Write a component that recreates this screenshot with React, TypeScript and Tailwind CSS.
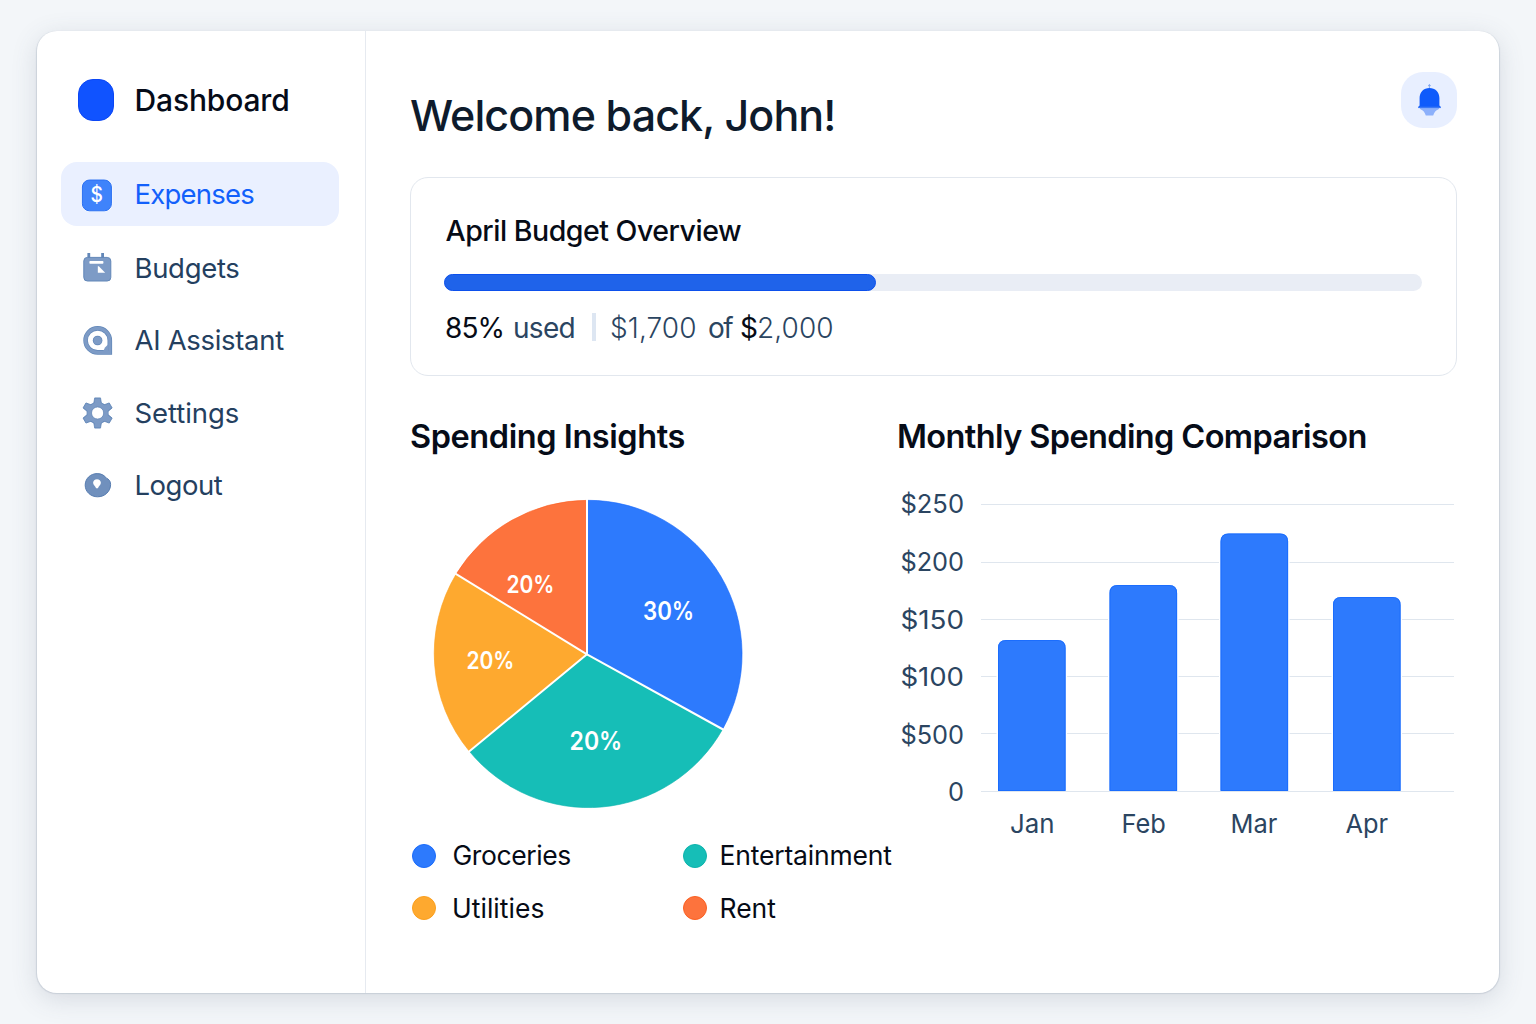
import type { ReactNode } from "react";

const ICON = "h-8 w-8 shrink-0 overflow-visible";
const FILL = "#7d9bc6";
const EDGE = "#6287b8";

function DollarIcon() {
  return (
    <svg viewBox="0 0 32 32" className={ICON}>
      <rect x="0.3" y="0.9" width="31.2" height="33" rx="8.2" fill="#f6f9ff" />
      <rect x="1.4" y="2" width="29" height="30.8" rx="7" fill="#3f83fb" stroke="#2a6ff2" strokeWidth="1" />
      <text
        x="15.6"
        y="23.6"
        textAnchor="middle"
        fontSize="21"
        fontWeight="500"
        fill="#ffffff"
        fontFamily="Inter, sans-serif"
        textLength="12.4"
        lengthAdjust="spacingAndGlyphs"
      >
        $
      </text>
    </svg>
  );
}

function CalendarIcon() {
  return (
    <svg viewBox="0 0 32 32" className={ICON}>
      <path d="M7.8 1V6M21.6 1V6" stroke={EDGE} strokeWidth="2.8" />
      <rect x="2.8" y="5.4" width="27" height="23.6" rx="3.6" fill={FILL} stroke={EDGE} strokeWidth="1" />
      <rect x="8.4" y="9" width="14" height="2.7" rx="0.8" fill="#ffffff" />
      <path d="M16.8 14.2V20.8H24.2L17.8 14.2Z" fill="#ffffff" />
    </svg>
  );
}

function AssistantIcon() {
  return (
    <svg viewBox="0 0 32 32" className={ICON}>
      <path
        d="M16.6 3.4A12 12 0 1 0 16.6 27.4H28.8V15.4A12 12 0 0 0 16.6 3.4Z"
        fill="#ffffff"
        stroke={EDGE}
        strokeWidth="4.6"
      />
      <path
        d="M16.6 3.4A12 12 0 1 0 16.6 27.4H28.8V15.4A12 12 0 0 0 16.6 3.4Z"
        fill="none"
        stroke={FILL}
        strokeWidth="3.2"
      />
      <path d="M22 26.5 24 22.6 27 19.5V27Z" fill={FILL} />
      <circle cx="16.6" cy="15.5" r="4.8" fill={EDGE} />
      <circle cx="16.6" cy="15.5" r="4.1" fill={FILL} />
    </svg>
  );
}

const TEETH = [0, 60, 120, 180, 240, 300];

function GearIcon() {
  return (
    <svg viewBox="0 0 32 32" className={ICON}>
      {TEETH.map((a) => (
        <path
          key={a}
          d="M13.7 0.9H19.5L20.7 8H12.5Z"
          fill={EDGE}
          stroke={EDGE}
          strokeWidth="0.8"
          strokeLinejoin="round"
          transform={`rotate(${a} 16.6 16)`}
        />
      ))}
      <circle cx="16.6" cy="16" r="11" fill={EDGE} />
      {TEETH.map((a) => (
        <path key={a} d="M14.2 1.4H19L20.2 8H13Z" fill={FILL} transform={`rotate(${a} 16.6 16)`} />
      ))}
      <circle cx="16.6" cy="16" r="10.4" fill={FILL} />
      <circle cx="16.6" cy="16" r="6.1" fill="#ffffff" stroke={EDGE} strokeWidth="0.8" />
    </svg>
  );
}

function LogoutIcon() {
  return (
    <svg viewBox="0 0 32 32" className={ICON}>
      <path
        d="M16.2 4.6C20.4 4.6 23.6 6.4 25.4 9.2C27.8 10 29.6 12.2 29.6 15.4C29.6 22.4 23.8 27.8 16.6 27.8C9.8 27.8 4.2 22.8 4.2 16.2C4.2 9.6 9.4 4.6 16.2 4.6Z"
        fill="#7090bd"
        stroke="#567cb0"
        strokeWidth="1"
      />
      <path
        d="M16 10.2C18.2 10.2 19.9 11.7 19.9 13.8C19.9 16.2 17.6 17.2 16.9 19.2H15.1C14.4 17.2 12.1 16.2 12.1 13.8C12.1 11.7 13.8 10.2 16 10.2Z"
        fill="#ffffff"
      />
    </svg>
  );
}

function BellIcon() {
  return (
    <svg viewBox="0 0 56 56" className="h-14 w-14">
      <path d="M28.4 12V16M27 13.6H29.8" stroke="#7fa4ee" strokeWidth="0.9" />
      <path d="M18.5 35.4H38.5L37.6 37.2C34.6 38.2 33.4 40.2 32.2 43.4H24.8C23.6 40.2 22.4 38.2 19.4 37.2Z" fill="#8cb0fb" />
      <path
        d="M28.4 15.9C34.2 15.9 38.4 20 38.4 26V33.6L39.6 34.8V36H17.4V34.8L18.6 33.6V26C18.6 20 22.8 15.9 28.4 15.9Z"
        fill="#0f5bfb"
      />
      <path d="M17.4 35.4H39.6" stroke="#3a78f5" strokeWidth="1.4" />
    </svg>
  );
}

function NavItem({ icon, label, text, active }: { icon: ReactNode; label: string; text: string; active?: boolean }) {
  return (
    <a
      className={
        active
          ? "mb-0.5 flex h-16 items-center gap-[21.5px] rounded-2xl bg-[#eaf0ff] pl-5 text-[#1260fb]"
          : "flex h-16 items-center gap-[21.5px] pl-5 text-[#24405f]"
      }
    >
      {icon}
      <span className={text}>{label}</span>
    </a>
  );
}

const SLICES = [
  { d: "M154.5 154.3V0.3A154 154 0 0 1 289.6 229.2Z", fill: "#2d7afd", edge: "#1466fb" },
  { d: "M154.5 154.3L289.6 229.2A154 154 0 0 1 36.4 251.3Z", fill: "#16beb7", edge: "#0db3ac" },
  { d: "M154.5 154.3L36.4 251.3A154 154 0 0 1 23.2 74.1Z", fill: "#fea92f", edge: "#fb9f1d" },
  { d: "M154.5 154.3L23.2 74.1A154 154 0 0 1 154.5 0.3Z", fill: "#fd733d", edge: "#fb6022" },
];

const SHARES = [
  { x: 210, y: 120.4, size: 25, value: "30%", w: 51.2 },
  { x: 136.5, y: 249.6, size: 26, value: "20%", w: 52.8 },
  { x: 33.4, y: 168.7, size: 24, value: "20%", w: 48 },
  { x: 73.4, y: 92.6, size: 24, value: "20%", w: 48 },
];

function PieChart() {
  return (
    <svg viewBox="0 0 309 309" className="ml-[22.5px] mt-[39px] h-[309px] w-[309px] overflow-visible">
      {SLICES.map((s) => (
        <path key={s.fill} d={s.d} fill={s.fill} stroke={s.edge} strokeWidth="0.6" />
      ))}
      <path
        d="M154 154.3V-1M154 154.3L291 230M154 154.3L35.2 252.3M154 154.3L22 73.4"
        stroke="#ffffff"
        strokeWidth="2"
        fill="none"
      />
      {SHARES.map((s, i) => (
        <text
          key={i}
          x={s.x}
          y={s.y}
          fontSize={s.size}
          fontWeight="600"
          fill="#ffffff"
          textLength={s.w}
          lengthAdjust="spacingAndGlyphs"
        >
          {s.value}
        </text>
      ))}
    </svg>
  );
}

const TICKS = [
  { label: "$250", line: 20.5, x: 3.4, w: 63.6, y: 29.2 },
  { label: "$200", line: 78.5, x: 3.4, w: 63.6, y: 87.4 },
  { label: "$150", line: 135.5, x: 3.4, w: 63.6, y: 145 },
  { label: "$100", line: 192.5, x: 3.4, w: 63.6, y: 202.4 },
  { label: "$500", line: 249.5, x: 3.4, w: 63.6, y: 260 },
  { label: "0", line: 307.5, x: 51, w: 16, y: 317.2 },
];

const BARS = [
  { label: "Jan", x: 101, top: 156, tx: 113, tw: 44.6 },
  { label: "Feb", x: 212.5, top: 101, tx: 224.5, tw: 44.4 },
  { label: "Mar", x: 323.5, top: 49.5, tx: 333.6, tw: 46.8 },
  { label: "Apr", x: 436, top: 113, tx: 448.5, tw: 42.6 },
];

function BarChart() {
  return (
    <svg viewBox="0 0 560 360" className="mt-[23px] h-[360px] w-[560px]">
      {TICKS.map((t) => (
        <g key={t.label}>
          <path d={`M84 ${t.line}H557`} stroke="#dfe6ee" strokeWidth="1.2" />
          <text
            x={t.x}
            y={t.y}
            fontSize="26"
            fontWeight="370"
            fill="#2b4561"
            textLength={t.w}
            lengthAdjust="spacingAndGlyphs"
          >
            {t.label}
          </text>
        </g>
      ))}
      {BARS.map((b) => (
        <g key={b.label}>
          <path
            d={`M${b.x} 307V${b.top + 8}q0 -8 8 -8h51.6q8 0 8 8V307Z`}
            fill="#2d7afd"
            stroke="#ffffff"
            strokeWidth="3"
            paintOrder="stroke"
          />
          <path
            d={`M${b.x + 0.5} 306.5V${b.top + 8}q0 -7.5 7.5 -7.5h51.6q7.5 0 7.5 7.5V306.5Z`}
            fill="none"
            stroke="#176afc"
            strokeWidth="0.8"
          />
          <text x={b.tx} y="349.4" fontSize="26" fill="#2b4561" textLength={b.tw} lengthAdjust="spacingAndGlyphs">
            {b.label}
          </text>
        </g>
      ))}
      <path d="M84 307.5H557" stroke="#dfe6ee" strokeWidth="1" />
    </svg>
  );
}

function Legend({ dot, label, text }: { dot: string; label: string; text: string }) {
  return (
    <div className="flex items-center">
      <span className={dot} />
      <span className={text}>{label}</span>
    </div>
  );
}

export default function App() {
  return (
    <div className="flex h-[1024px] w-[1536px] bg-[#f3f6f9] px-[37px] pt-[31px] font-['Inter',sans-serif] whitespace-nowrap">
      <div className="flex h-[962px] w-[1461.5px] rounded-[20px] bg-white shadow-[0_0.5px_1px_0.5px_rgba(130,145,165,0.26),0_6px_26px_rgba(71,85,105,0.17)]">
        <aside className="w-[329px] shrink-0 border-r-[1.5px] border-[#e6eaf0] pr-[26px] pl-6">
          <div className="mt-12 flex h-[42px] items-center pl-[17px]">
            <span className="h-[42px] w-9 rounded-[15px] border border-[#0b46f5] bg-[#1053ff]" />
            <span className="mt-px ml-[20.5px] text-[30px] font-medium tracking-[-0.15px] text-[#050b18]">Dashboard</span>
          </div>
          <nav className="mt-[41px] flex flex-col gap-[8.3px]">
            <NavItem active icon={<DollarIcon />} label="Expenses" text="mt-0.5 text-[27.5px] tracking-[-0.78px]" />
            <NavItem icon={<CalendarIcon />} label="Budgets" text="text-[27.5px] tracking-[-0.32px]" />
            <NavItem icon={<AssistantIcon />} label="AI Assistant" text="text-[27.5px] tracking-[-0.31px]" />
            <NavItem icon={<GearIcon />} label="Settings" text="mt-px text-[27.5px] tracking-[-0.08px]" />
            <NavItem icon={<LogoutIcon />} label="Logout" text="text-[27.5px] tracking-[-0.5px]" />
          </nav>
        </aside>

        <main className="flex-1 pl-[44px]">
          <header className="flex h-[146px] w-[1047px] justify-between">
            <h1 className="mt-[56px] h-14 text-[43px] leading-14 font-medium tracking-[-0.9px] text-[#0e1b2c]">
              Welcome back, John!
            </h1>
            <button className="mt-[41px] h-14 w-14 rounded-[22px] bg-[#e8efff]">
              <BellIcon />
            </button>
          </header>

          <section className="h-[199px] w-[1047px] rounded-[18px] border-[1.3px] border-[#e2e7ee] px-[33px] pt-8">
            <h2 className="ml-[1.5px] h-[42px] text-[28.5px] leading-[42px] font-medium tracking-[-0.48px] text-[#060b16]">
              April Budget Overview
            </h2>
            <div className="mt-[22px] h-[17px] w-[978px] rounded-full bg-[#e9edf5]">
              <div className="h-[17px] w-[431.5px] rounded-full border border-[#0c50ec] bg-[#1f63ea]" />
            </div>
            <div className="mt-[17px] ml-px flex h-10 items-center text-[28px] text-[#2b4561]">
              <span className="w-[68px] tracking-[-0.92px] text-[#060b16]">85%</span>
              <span className="w-[79px] tracking-[-0.7px]">used</span>
              <span className="-mt-0.5 h-7 w-[3.5px] bg-[#dde6f2]" />
              <span className="ml-[14.5px] w-[98px] font-[360] tracking-[0.1px]">$1,700</span>
              <span className="w-8 tracking-[-1.5px]">of</span>
              <span className="w-[17px] tracking-[-1px] text-[#060b16]">$</span>
              <span className="font-[360] tracking-[0.1px]">2,000</span>
            </div>
          </section>

          <div className="mt-[37px] flex">
            <section className="w-[487px]">
              <h2 className="h-12 text-[32.5px] leading-12 font-semibold tracking-[-0.43px] text-[#060c18]">
                Spending Insights
              </h2>
              <PieChart />
              <div className="mt-[21px] ml-0.5 grid grid-cols-[271px_auto] grid-rows-[52px_53px] text-[#060b16]">
                <Legend
                  dot="h-6 w-6 rounded-full border border-[#1a6bfb] bg-[#2d7afd]"
                  label="Groceries"
                  text="ml-[16.5px] text-[26.5px] tracking-[-0.42px]"
                />
                <Legend
                  dot="h-6 w-6 rounded-full border border-[#0db3ac] bg-[#16beb7]"
                  label="Entertainment"
                  text="ml-[12.5px] text-[26.5px] tracking-[-0.18px]"
                />
                <Legend
                  dot="-mt-0.5 h-6 w-6 rounded-full border border-[#fb9f1d] bg-[#fea92f]"
                  label="Utilities"
                  text="ml-4 text-[26.5px] tracking-[0.03px]"
                />
                <Legend
                  dot="-mt-0.5 h-6 w-6 rounded-full border border-[#fb6022] bg-[#fd733d]"
                  label="Rent"
                  text="ml-[12.5px] text-[26.5px] tracking-[0px]"
                />
              </div>
            </section>
            <section>
              <h2 className="h-12 text-[32.5px] leading-12 font-semibold tracking-[-0.62px] text-[#060c18]">
                Monthly Spending Comparison
              </h2>
              <BarChart />
            </section>
          </div>
        </main>
      </div>
    </div>
  );
}
